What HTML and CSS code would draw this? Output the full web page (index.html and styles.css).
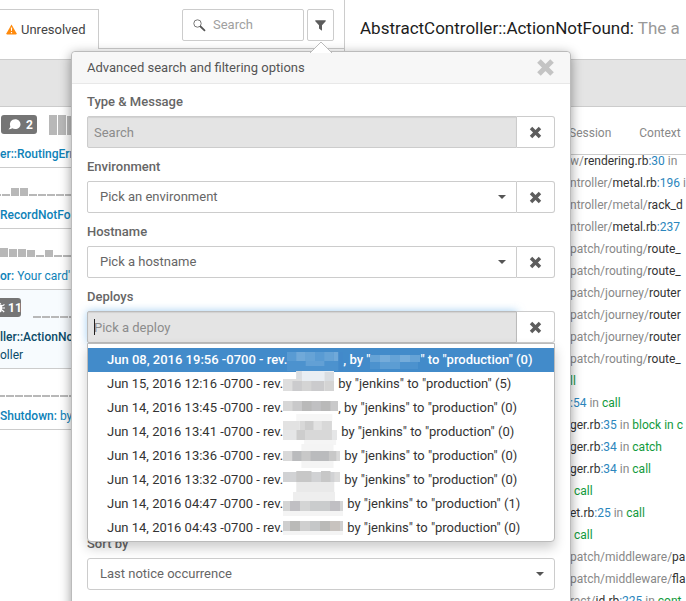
FILE: index.html
```html
<!DOCTYPE html>
<html lang="en">
<head>
<meta charset="utf-8">
<title>Errors</title>
<link rel="stylesheet" href="styles.css">
</head>
<body>
<svg class="defs" aria-hidden="true">
  <symbol id="cross" viewBox="0 0 12 12"><path d="M3 3l6 6M9 3l-6 6" fill="none" stroke="currentColor" stroke-width="3.2" stroke-linecap="square"/></symbol>
</svg>
<div class="page">
  <section class="faults">
    <header class="faults-head">
      <a class="tab" href="#unresolved">
        <svg width="11" height="11" viewBox="0 0 11 11" aria-hidden="true"><path d="M5.500.5L10.500 9.200Q10.800 10.500 9.800 10.500H1.200Q.2 10.500.5 9.200Z" fill="#ff8a0c"/><path d="M4.800 3.500h1.400l-.3 3.500h-.8zM4.900 8h1.200v1.200H4.900z" fill="#fff"/></svg>
        Unresolved
      </a>
      <form class="tools">
        <div class="search">
          <svg width="13" height="13" viewBox="0 0 13 13" aria-hidden="true"><circle cx="4.500" cy="4.500" r="3.700" fill="none" stroke="#777" stroke-width="1"/><path d="M7.500 7.500l4 3.800" stroke="#555" stroke-width="1.800" stroke-linecap="round"/></svg>
          <input type="search" placeholder="Search" aria-label="Search">
        </div>
        <div class="filter">
          <button type="button" class="filter-button" aria-label="Filter">
            <svg width="11" height="11" viewBox="0 0 11 11" aria-hidden="true"><path d="M.3.3h10.400v1L7 5.300V10.800L4 8.500V5.300L.3 1.300z" fill="#5c5c5c"/></svg>
          </button>
          <div class="popover">
            <svg class="arrow" width="22" height="12" viewBox="0 0 22 12" aria-hidden="true"><path d="M0 12L11 1L22 12" fill="#fff" stroke="#bbb"/></svg>
            <div class="popover-head">
              <h2>Advanced search and filtering options</h2>
              <button type="button" class="close" aria-label="Close"><svg width="19" height="19"><use href="#cross"/></svg></button>
            </div>
            <div class="popover-body">
              <div class="field">
                <label for="message">Type &amp; Message</label>
                <div class="group">
                  <input class="control shaded" id="message" type="text" placeholder="Search">
                  <button type="button" class="clear" aria-label="Clear message"><svg width="13" height="13"><use href="#cross"/></svg></button>
                </div>
              </div>
              <div class="field">
                <label for="environment">Environment</label>
                <div class="group">
                  <div class="picker"><select class="control" id="environment"><option>Pick an environment</option></select></div>
                  <button type="button" class="clear" aria-label="Clear environment"><svg width="13" height="13"><use href="#cross"/></svg></button>
                </div>
              </div>
              <div class="field">
                <label for="hostname">Hostname</label>
                <div class="group">
                  <div class="picker"><select class="control" id="hostname"><option>Pick a hostname</option></select></div>
                  <button type="button" class="clear" aria-label="Clear hostname"><svg width="13" height="13"><use href="#cross"/></svg></button>
                </div>
              </div>
              <div class="field">
                <label for="deploy">Deploys</label>
                <div class="group">
                  <input class="control shaded active" id="deploy" type="text" placeholder="Pick a deploy">
                  <span class="caret"></span>
                  <button type="button" class="clear" aria-label="Clear deploy"><svg width="13" height="13"><use href="#cross"/></svg></button>
                  <ul class="menu">
                    <li class="selected"><span>Jun 08, 2016 19:56 -0700 - rev.</span>
                      <svg class="blur" width="56" height="24" viewBox="0 0 60 24" preserveAspectRatio="none"><path fill="#599bd3" d="M0 4h60v9H0z"/><path fill="#70a9d9" d="M10 4h10v9H10zM50 4h5v9h-5z"/><path fill="#66a3d6" d="M20 4h10v9H20zM40 4h10v9H40z"/><path fill="#4c92ce" d="M0 13h60v10H0z"/><path fill="#62a0d5" d="M20 13h20v5H20z"/><path fill="#4289ca" d="M55 4h5v19h-5z"/></svg>
                      <span>, by "</span><svg class="blur" width="50" height="24" viewBox="0 0 50 24"><path fill="#66a3d6" d="M0 7h50v7H0z"/><path fill="#75acda" d="M10 7h10v7H10zM30 7h10v7H30z"/><path fill="#4c92ce" d="M0 14h48v7H0z"/><path fill="#5c9dd3" d="M10 14h20v7H10z"/></svg><span>" to "production" (0)</span></li>
                    <li><span>Jun 15, 2016 12:16 -0700 - rev.</span>
                      <svg class="blur gap" width="51" height="24" viewBox="0 0 54 24" preserveAspectRatio="none"><path fill="#e9eef3" d="M14-1h40v10H14z"/><path fill="#d9dde1" d="M14-1h6v10h-6zM44 0h10v9H44z"/><path fill="#dedede" d="M0 7h20v12H0z"/><path fill="#cbcbcd" d="M10 9h34v10H10z"/><path fill="#d4d4d4" d="M20 9h10v10H20zM44 9h10v10H44z"/></svg>
                      <span>by "jenkins" to "production" (5)</span></li>
                    <li><span>Jun 14, 2016 13:45 -0700 - rev.</span>
                      <svg class="blur" width="55" height="24" viewBox="0 0 58 24" preserveAspectRatio="none"><path fill="#c9c9ca" d="M0 5h58v10H0z"/><path fill="#b9b9b9" d="M20 5h30v10H20z"/><path fill="#d7d7d7" d="M0 5h10v10H0z"/><path fill="#c0c0c2" d="M30 5h10v10H30z"/><path fill="#f6f6f6" d="M14 18h38v7H14z"/></svg>
                      <span>, by "jenkins" to "production" (0)</span></li>
                    <li><span>Jun 14, 2016 13:41 -0700 - rev.</span>
                      <svg class="blur gap" width="54" height="24" viewBox="0 0 64 24" preserveAspectRatio="none"><path fill="#e5e6e7" d="M0 10h64v10H0z"/><path fill="#d8d8d8" d="M20 1h38v19H20z"/><path fill="#e2e2e2" d="M0 1h20v9H0zM36 1h10v9H36z"/><path fill="#cdcdcd" d="M16 10h10v10H16zM26 1h10v9H26z"/><path fill="#f5f5f5" d="M25 20h38v5H25z"/></svg>
                      <span>by "jenkins" to "production" (0)</span></li>
                    <li><span>Jun 14, 2016 13:36 -0700 - rev.</span>
                      <svg class="blur gap" width="57" height="24" viewBox="0 0 62 24" preserveAspectRatio="none"><path fill="#f4f4f4" d="M20 0h35v24H20z"/><path fill="#c8c8c8" d="M0 7h62v10H0z"/><path fill="#babbbd" d="M10 7h10v10H10zM30 7h20v10H30z"/><path fill="#d9d9d9" d="M0 7h10v10H0zM58 7h4v10h-4z"/></svg>
                      <span>by "jenkins" to "production" (0)</span></li>
                    <li><span>Jun 14, 2016 13:32 -0700 - rev.</span>
                      <svg class="blur gap" width="57" height="24" viewBox="0 0 60 24" preserveAspectRatio="none"><path fill="#d1d2d4" d="M0 4h60v10H0z"/><path fill="#c7c7c7" d="M14 3h16v11H14zM40 3h10v11H40z"/><path fill="#e9e9e9" d="M14 14h40v15H14z"/><path fill="#dcdcdc" d="M54 4h6v10h-6z"/></svg>
                      <span>by "jenkins" to "production" (0)</span></li>
                    <li><span>Jun 14, 2016 04:47 -0700 - rev.</span>
                      <svg class="blur gap" width="60" height="24" viewBox="0 0 60 24"><path fill="#eee" d="M10 0h42v10H10z"/><path fill="#d4d5d5" d="M0 9h60v10H0z"/><path fill="#c0bfc3" d="M7 9h10v10H7zM47 9h10v10H47z"/><path fill="#cacccd" d="M27 9h20v10H27z"/><path fill="#f4f4f4" d="M0 19h60v5H0z"/></svg>
                      <span>by "jenkins" to "production" (1)</span></li>
                    <li><span>Jun 14, 2016 04:43 -0700 - rev.</span>
                      <svg class="blur gap" width="60" height="24" viewBox="0 0 60 24"><path fill="#cfcfcf" d="M0 5h60v10H0z"/><path fill="#babab8" d="M7 5h10v10H7zM37 5h10v10H37z"/><path fill="#c5c7c8" d="M27 5h10v10H27z"/><path fill="#c8c3bf" d="M47 5h10v10H47z"/><path fill="#f4f4f4" d="M0 15h60v4H0z"/></svg>
                      <span>by "jenkins" to "production" (0)</span></li>
                  </ul>
                </div>
              </div>
              <div class="field sort">
                <label for="sort">Sort by</label>
                <div class="group">
                  <div class="picker whole"><select class="control" id="sort"><option>Last notice occurrence</option></select></div>
                </div>
              </div>
            </div>
          </div>
        </div>
      </form>
    </header>
    <div class="band"></div>
    <ul class="fault-list">
      <li>
        <div class="meta">
          <span class="badge"><svg width="13" height="11" viewBox="0 0 13 11" aria-hidden="true"><path d="M7.200.3C10.200.3 12.500 2.500 12.500 5.200S10.200 10 7.200 10C6 10 5.100 9.800 4.200 9.300C3.200 10.200 1.800 10.500.3 10.300C1.500 9.400 2.100 8.500 2.300 7.400C1 3.500 3.500.3 7.200.3Z" fill="#fff"/></svg>2</span>
          <svg class="spark" width="27" height="20"><path d="M0 0h8v20H0zM9 0h8v20H9zM18 1h8v19h-8z"/></svg>
        </div>
        <a href="#1"><b>er::RoutingErr</b></a>
      </li>
      <li>
        <div class="meta"><svg class="spark" width="80" height="20"><path d="M0 18h1v2H0zM2 18h8v2H2zM11 12h8v8h-8zM20 12h8v8h-8zM29 18h8v2h-8zM38 18h8v2h-8zM47 18h8v2h-8zM56 18h8v2h-8zM65 18h8v2h-8z"/></svg></div>
        <a href="#2"><b>RecordNotFo</b></a>
      </li>
      <li>
        <div class="meta"><svg class="spark" width="80" height="20"><path d="M0 11h8v9H0zM9 12h8v8H9zM18 12h8v8h-8zM27 13h8v7h-8zM36 18h8v2h-8zM45 13h8v7h-8zM54 18h8v2h-8zM63 18h8v2h-8z"/></svg></div>
        <a href="#3"><b>or:</b> Your card'</a>
      </li>
      <li class="current">
        <div class="meta">
          <span class="badge cut"><svg width="12" height="11" viewBox="0 0 12 11" aria-hidden="true"><path d="M3 3h6v4.500Q9 10.500 6 10.500T3 7.500z" fill="#fff"/><path d="M4 2.500Q6-.5 8 2.500M3 4L.5 2.500M9 4l2.500-1.500M3 6H0M9 6h3M3 8L.8 10M9 8l2.200 2" fill="none" stroke="#fff" stroke-width="1.200"/></svg>11</span>
          <svg class="spark" width="45" height="20"><path d="M0 18h8v2H0zM9 18h8v2H9zM18 18h8v2h-8zM27 18h8v2h-8zM36 18h8v2h-8z"/></svg>
        </div>
        <a href="#4"><b>ller::ActionNo</b><br>oller</a>
      </li>
      <li>
        <div class="meta"><svg class="spark" width="80" height="20"><path d="M0 18h5v2H0zM6 18h8v2H6zM15 18h8v2h-8zM24 18h8v2h-8zM33 18h8v2h-8zM42 18h8v2h-8zM51 18h8v2h-8zM60 18h8v2h-8zM69 18h8v2h-8z"/></svg></div>
        <a href="#5"><b>Shutdown:</b> by</a>
      </li>
    </ul>
  </section>
  <main class="detail">
    <h1>AbstractController::ActionNotFound: <span>The a</span></h1>
    <div class="band"></div>
    <nav class="detail-tabs"><a href="#session">Session</a><a href="#context">Context</a></nav>
    <ol class="trace">
      <li>w/<b>rendering.rb</b><i>:30</i> in</li>
      <li>ntroller/<b>metal.rb</b><i>:196</i> i</li>
      <li>ntroller/metal/<b>rack_d</b></li>
      <li>ntroller/<b>metal.rb</b><i>:237</i></li>
      <li>patch/routing/<b>route_</b></li>
      <li>patch/routing/<b>route_</b></li>
      <li>patch/journey/<b>router</b></li>
      <li>patch/journey/<b>router</b></li>
      <li>patch/journey/<b>router</b></li>
      <li>patch/routing/<b>route_</b></li>
      <li><em>ll</em></li>
      <li><i>:54</i> in <em>call</em></li>
      <li><b>ger.rb</b><i>:35</i> in <em>block in c</em></li>
      <li><b>ger.rb</b><i>:34</i> in <em>catch</em></li>
      <li><b>ger.rb</b><i>:34</i> in <em>call</em></li>
      <li class="indent"><em>call</em></li>
      <li><b>et.rb</b><i>:25</i> in <em>call</em></li>
      <li class="indent"><em>call</em></li>
      <li>patch/middleware/<b>pa</b></li>
      <li>patch/middleware/<b>fla</b></li>
      <li>ract/<b>id.rb</b><i>:225</i> in <em>cont</em></li>
    </ol>
  </main>
</div>
</body>
</html>
```
FILE: styles.css
```css
* { box-sizing: border-box; }

body {
  margin: 0;
  background: #fff;
  color: #555;
  font: 13px/18px Roboto, "Liberation Sans", sans-serif;
}

h1, h2, ul, ol { margin: 0; padding: 0; font-weight: 400; list-style: none; }
a { color: inherit; text-decoration: none; }
button, input, select { margin: 0; font: inherit; color: inherit; }
.defs { display: none; }

.page {
  display: grid;
  grid-template-columns: 345px minmax(0, 1fr);
  height: 100vh;
  overflow: hidden;
}

.band {
  height: 48px;
  background: #e4e4e4;
  border-top: 1px solid #ccc;
  border-bottom: 1px solid #ccc;
}

/* Fault list */
.faults { border-right: 1px solid #ccc; }
.faults-head { display: flex; height: 59px; padding: 9px 0 10px; }

.tab {
  display: flex;
  align-items: center;
  gap: 4px;
  width: 99px;
  padding-left: 6px;
  border-top: 1px solid #ccc;
  border-right: 1px solid #ccc;
  color: #444;
}

.tools {
  flex: 1;
  display: flex;
  justify-content: flex-end;
  gap: 3px;
  padding-right: 10px;
  border-bottom: 1px solid #ccc;
}

.search {
  display: flex;
  align-items: center;
  gap: 7px;
  width: 122px;
  height: 32px;
  padding-left: 10px;
  border: 1px solid #ccc;
  border-radius: 2px;
}

.search svg { flex: none; }
.search input { min-width: 0; width: 100%; padding: 0; border: 0; outline: 0; background: none; }
::placeholder { color: #8c8c8c; opacity: 1; }
.search ::placeholder { color: #a0a0a0; }

.filter { position: relative; }

.filter-button {
  display: flex;
  align-items: center;
  justify-content: center;
  width: 27px;
  height: 32px;
  padding: 0;
  border: 1px solid #ccc;
  border-radius: 2px;
  background: #fff;
}

.fault-list li {
  padding: 8px 0 4px;
  border-bottom: 1px solid #ccc;
  color: #0e82b8;
  font-size: 12px;
  white-space: nowrap;
  overflow: hidden;
}

.fault-list b { font-weight: 500; }
.fault-list a { display: block; }
.fault-list .current { background: #f7fbfe; color: #0b4b69; }
.meta { display: flex; gap: 12px; height: 20px; margin-bottom: 10px; }
.spark { flex: none; fill: #b8b8b8; }

.badge {
  display: flex;
  align-items: center;
  gap: 5px;
  width: 36px;
  height: 19px;
  margin-left: 1px;
  padding-left: 7px;
  border-radius: 3px;
  background: #757575;
  color: #fff;
  font-size: 12px;
  font-weight: 700;
}

.badge.cut { width: 29px; margin-left: -8px; padding-left: 1px; }
.badge svg { flex: none; }
.badge.cut svg { margin-right: -2px; }

/* Filter popover */
.popover {
  position: absolute;
  z-index: 2;
  top: 42px;
  left: -236px;
  width: 500px;
  height: 600px;
  border: 1px solid #bbb;
  border-radius: 4px;
  background: #fff;
  box-shadow: 0 3px 12px rgba(0, 0, 0, .4);
}

.arrow { position: absolute; top: -11px; left: 50%; margin-left: -11px; }

.popover-head {
  display: flex;
  align-items: center;
  justify-content: space-between;
  height: 32px;
  padding: 0 15px;
  border-bottom: 1px solid #e8e8e8;
  border-radius: 4px 4px 0 0;
  background: #f7f7f7;
}

.popover-head h2 { font-size: 13px; }
.close { display: flex; padding: 0; border: 0; background: none; color: #c4c4c4; }
.popover-body { padding: 8px 15px; }
.field { margin-bottom: 9px; }
.field label { display: block; margin-bottom: 4px; line-height: 20px; font-weight: 500; color: #666; }
.sort { margin-top: 191px; }
.group { position: relative; display: flex; }

.control {
  flex: 1;
  width: 100%;
  min-width: 0;
  height: 32px;
  padding: 0 6px;
  border: 1px solid #ccc;
  border-radius: 2px 0 0 2px;
  outline: 0;
  background: #fff;
}

.picker { position: relative; flex: 1; }
.picker .control { padding-left: 12px; appearance: none; color: #666; }
.picker.whole .control { border-radius: 3px; }

.picker::after {
  content: "";
  position: absolute;
  top: 14px;
  right: 11px;
  border: 4px solid transparent;
  border-top-color: #555;
  border-bottom: 0;
  pointer-events: none;
}

.control.shaded { background: #e4e4e4; box-shadow: inset 0 1px 1px rgba(0, 0, 0, .08); }
.control.active { border-color: #bbb; box-shadow: inset 0 1px 1px rgba(0, 0, 0, .08), 0 0 8px rgba(102, 175, 233, .6); }
.caret { position: absolute; top: 8px; left: 7px; width: 1px; height: 16px; background: #222; }

.clear {
  display: flex;
  align-items: center;
  justify-content: center;
  width: 38px;
  height: 32px;
  padding: 0;
  border: 1px solid #ccc;
  border-left: 0;
  border-radius: 0 3px 3px 0;
  background: #fff;
  color: #5c5c5c;
}

.menu {
  position: absolute;
  top: 32px;
  left: 0;
  right: 0;
  padding: 4px 0 1px;
  border: 1px solid #bbb;
  border-radius: 0 0 4px 4px;
  background: #fff;
  box-shadow: 0 6px 12px rgba(0, 0, 0, .2);
  color: #333;
}

.menu li { display: flex; height: 24px; padding-left: 19px; line-height: 24px; white-space: pre; }
.menu .selected { background: #428bca; color: #fff; font-weight: 500; }
.blur { flex: none; overflow: visible; }
.blur.gap { margin-right: 4px; }

/* Fault detail */
h1 { height: 59px; padding-left: 15px; overflow: hidden; color: #1c1c1c; font-size: 17px; line-height: 57px; white-space: nowrap; }
h1 span { color: #999; }

.detail-tabs {
  display: flex;
  gap: 28px;
  height: 48px;
  padding-left: 224px;
  border-bottom: 1px solid #ccc;
  color: #888;
  font-size: 12px;
  line-height: 52px;
}

.trace { margin-top: -5px; padding-left: 225px; font-size: 12px; line-height: 22px; color: #888; white-space: nowrap; }
.trace b, .trace i, .trace em { font-style: normal; font-weight: 400; }
.trace b { color: #333; }
.trace i { color: #2b86bd; }
.trace em { color: #129a3c; }
.trace .indent { padding-left: 4px; }
```
